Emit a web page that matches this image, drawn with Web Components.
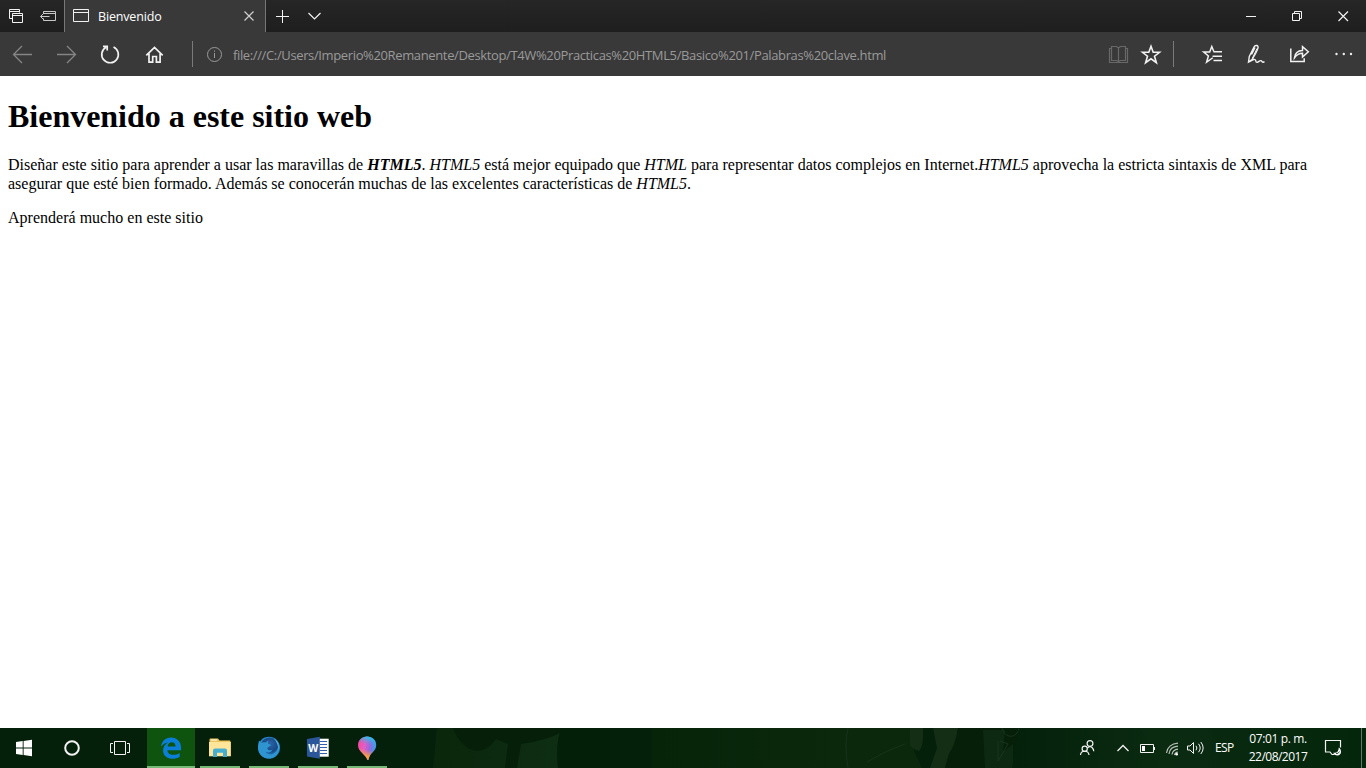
<!DOCTYPE html>
<html lang="es">
<head>
<meta charset="utf-8">
<title>Bienvenido</title>
<style>
html,body{margin:0;height:100%;overflow:hidden;background:#fff}
</style>
</head>
<body>
<desktop-screen></desktop-screen>
<script>
const define = (name, html) => customElements.define(name, class extends HTMLElement {
  constructor() {
    super();
    this.attachShadow({ mode: 'open' }).innerHTML = html;
  }
});

/* Single line of text; "span" gives the width it is tracked to. */
customElements.define('tracked-text', class extends HTMLElement {
  constructor() {
    super();
    this.attachShadow({ mode: 'open' }).innerHTML =
      '<style>:host{display:block;white-space:pre}span{display:inline-block}</style><span><slot></slot></span>';
  }
  connectedCallback() {
    const el = this.shadowRoot.querySelector('span');
    const n = this.textContent.length;
    const target = Number(this.getAttribute('span'));
    const spacing = (target - el.getBoundingClientRect().width) / n;
    el.style.letterSpacing = spacing.toFixed(4) + 'px';
  }
});

/* Icon whose view box uses screen coordinates: box="x y w h". */
const icons = {
  tabs: '<path d="M9.5 18.5v-9h10v3M9.5 11.500h10M12.500 13.500h10v9h-10zM12.500 15.500h10M9.500 18.500h3"/>',
  aside: '<g stroke="#c8c8c8"><path d="M43.500 14v-2.500h12v9h-12v-2M43.500 13.500h12M40.500 16.500h9M43.500 13.500l-3 3 3 3"/></g>',
  page: '<path d="M73.500 9.500h15v12h-15zM73.500 12.500h15"/>',
  close: '<path stroke="#d0d0d0" stroke-width="1.200" d="M244.500 11.500l9 9M253.500 11.500l-9 9"/>',
  plus: '<path d="M276 16.500h13M282.500 10v13"/>',
  chevron: '<path stroke-width="1.200" d="M308.500 13l6 6 6-6"/>',
  min: '<path d="M1246 16.500h10"/>',
  restore: '<path d="M1292.500 13.500h7v7h-7zM1294.500 13.500v-2h7v7h-2"/>',
  quit: '<path stroke-width="1.200" d="M1338.500 11.500l9.500 9.500M1348 11.500l-9.500 9.500"/>',
  back: '<path stroke="#858585" stroke-width="1.300" d="M13.500 54.500H32M22 46l-8.500 8.500 8.500 8.500"/>',
  forward: '<path stroke="#858585" stroke-width="1.300" d="M57 54.500h18.500M67 46l8.500 8.500-8.500 8.500"/>',
  reload: '<path stroke-width="1.700" d="M113.500 46.900a8.300 8.300 0 1 1-7.500.3M103 46.300h4.200v4.200"/>',
  home: '<path stroke-width="1.700" d="M146.300 55.300l8.200-7.800 8.200 7.800M149 53.500v8.700h3.700v-5.700h3.700v5.700h3.700v-8.700"/>',
  info: '<g stroke="#999"><circle cx="214.500" cy="54.500" r="7"/><path d="M214.500 53v5M214.500 50.500v1.200"/></g>',
  book: '<g stroke="#686868" stroke-width="1.200"><path d="M1111.500 46.500h5l2 1.500 2-1.500h5v14h-5l-2 1-2-1h-5zM1118.500 48v13M1111.500 48.500h-2v14h18v-14h-2"/></g>',
  star: '<path stroke-width="1.600" d="M1151 46.300l2.200 6h6.300l-5 3.900 1.900 6.500-5.400-3.900-5.400 3.900 1.900-6.500-5-3.900h6.300z"/>',
  hub: '<path stroke-width="1.500" d="M1213.800 51.500l-2-5-2.100 5.500h-6l4.700 4-1.800 6.200 5.200-3.700 1-.7M1213.500 51.700h8.500M1212.500 56.200h9.500M1213.500 60.500h8.500"/>',
  pen: '<path stroke-width="1.400" d="M1248.500 62l.8-5.500 4.700-9.500c1.200-2.500 4.800-1.700 4 .8-.3 1.200-4.500 9.300-6 11.700zM1251.500 54.500l3.500-7M1248.500 62l5-2.500c1.500-.6 2.200.6 2.300 1.500.2 2 2 1.400 3.200.4 1-.8 2.500-1.200 3 .2.300 1 1.500.7 2.500 0"/><path d="M1252.500 58l4.500-9.500"/>',
  share: '<path stroke-width="1.500" d="M1290.800 48.500v13h13.400v-3.300M1294.500 57.700c.5-4.700 3.500-7 8-7.200v-3.800l5.800 5.100-5.800 5.200v-3.700c-3.500 0-5.500 1-8 4.400z"/>',
  dots: '<g fill="#eee" stroke="none"><circle cx="1336.500" cy="54" r="1.200"/><circle cx="1343.800" cy="54" r="1.200"/><circle cx="1351" cy="54" r="1.200"/></g>',
  start: '<path fill="#fff" stroke="none" d="M16 742.100l6.700-1v6.500H16zM23.600 741l8.400-1.200v7.800h-8.400zM16 748.500h6.700v6.600l-6.700-1zM23.600 748.500H32v7.800l-8.400-1.200z"/>',
  cortana: '<circle cx="72" cy="748" r="6.800" stroke-width="2"/>',
  views: '<path d="M114.500 741.500h11v13h-11zM113 743.500h-2.500v9h2.500M127 743.500h2.500v9h-2.500"/>',
  edge: '<path fill="#0b7fd8" stroke="none" d="M161 746.500c.8-5.200 4.500-9 10-9 6.200 0 10 4.400 10 10v2.700h-13.600c.1 3 2.700 4.600 5.700 4.600 2.500 0 4.700-.7 6.500-1.900v4.100c-2.100 1.200-4.900 1.800-7.600 1.800-5.600 0-8.900-3.500-8.900-8.200 0-3.600 1.900-6.700 5-8.200-2.800.4-5.200 1.800-7.100 4.100zM167.600 746.400h8c-.1-2.700-1.400-4.200-3.800-4.200-2.500 0-3.900 1.700-4.200 4.200z"/>',
  folder: '<g stroke="none"><path fill="#edc65b" d="M209.500 739.500q0-1 1-1h7.500l1.500 2h10q1 0 1 1v14.500h-21z"/><path fill="#fff" d="M211 739.500h6v1h-6z"/><path fill="#ffe59a" d="M209 742h21.800v14.300H209z"/><path fill="#46afd0" d="M213 750.500q0-2 2-2h10q2 0 2 2v6.500h-4v-4.300h-6v4.300h-4z"/></g>',
  firefox: '<defs><radialGradient id="a" cx=".55" cy=".35" r=".65"><stop stop-color="#2c64a8"/><stop offset=".65" stop-color="#174884"/><stop offset="1" stop-color="#2582c3"/></radialGradient></defs><g stroke="none"><circle cx="269" cy="747.800" r="11" fill="#2589cc"/><circle cx="269.500" cy="746.500" r="9" fill="url(#a)"/><path fill="#2f95d0" d="M259 740.500l2.500 2.500c1-1 2.500-1 4-.5l3-2-.5 3 3 1.600c-.2 1.400-3 1.800-3.700 2.800.2 2.400 3.500 3 5.300 1.600-1 3-4.700 3.700-7 2.300 2 3.700 8 3.600 11-1 1.300-2 1.800-4 1.500-6 2 5-.4 10.500-5 12.600-5 2.400-11.500 0-13.900-5-1.800-4-.9-8.200-.2-11.900z"/><path fill="#5bb8e6" d="M274 738.500c4.500 2.500 5.500 7 4.300 11.500.1-4-1.300-8-4.300-11.500z"/></g>',
  word: '<g stroke="none"><path fill="#fff" d="M318 738.700h10.700v18H318z"/><path stroke="#3262ae" stroke-width="1.200" d="M320 741.500h7M320 744.500h7M320 747.500h7M320 750.500h7M320 753.500h7"/><path fill="#2b579a" d="M307 739l12.800-2.200v22L307 756.600z"/><text x="308.300" y="752" font-family="Open Sans,sans-serif" font-weight="700" font-size="11" textLength="10" lengthAdjust="spacingAndGlyphs" fill="#fff">W</text></g>',
  paint: '<defs><linearGradient id="a" x1="0" y1=".35" x2="1" y2=".6"><stop stop-color="#f7499d"/><stop offset=".35" stop-color="#e25fc6"/><stop offset=".62" stop-color="#9a66dc"/><stop offset="1" stop-color="#28a8ee"/></linearGradient><linearGradient id="b" x1=".65" y1="0" x2=".45" y2="1"><stop stop-color="#17d0ec"/><stop offset=".38" stop-color="#3aa4e8" stop-opacity="0"/><stop offset=".55" stop-color="#ff8a50" stop-opacity="0"/><stop offset=".85" stop-color="#ffa23e"/></linearGradient></defs><g stroke="none"><path fill="url(#a)" d="M367 736.500c5.300 0 9.200 3.800 9.200 8.700 0 6.300-6.500 7.300-7.700 14.300-.3.800-1 .6-1.200 0-1.600-5.500-9.300-7.600-9.300-14.300 0-5 3.900-8.700 9-8.700z"/><path fill="url(#b)" d="M367 736.500c5.300 0 9.200 3.800 9.200 8.700 0 6.300-6.500 7.300-7.700 14.300-.3.800-1 .6-1.200 0-1.600-5.500-9.300-7.600-9.300-14.300 0-5 3.900-8.700 9-8.700z"/></g>',
  people: '<g stroke-width="1.200"><circle cx="1090" cy="743.500" r="2.900"/><path d="M1087.500 748c1.500-1.700 3.700-1.600 5 0 .8 1 1.200 2 1.300 3.300"/><circle cx="1084.700" cy="748.700" r="2.600"/><path d="M1080.500 755c.3-5 8-5 8.500 0"/></g>',
  up: '<path stroke-width="1.300" d="M1117.500 751l5.500-5.500 5.500 5.500"/>',
  battery: '<path d="M1140.500 744.500h13v8h-13zM1154.500 747v3"/><path fill="#fff" stroke="none" d="M1142 746h3v5h-3z"/>',
  wifi: '<g stroke="#ddd" stroke-width="1.200"><path stroke="#b6c1b7" d="M1166.500 753c.5-5.500 5-9.500 11.500-9.800M1169 754c.5-4.400 4-7.500 9-7.800M1172 754.500c.5-3 2.500-5 6-5.300M1174.500 755c.4-1.700 1.400-2.700 3.300-2.900"/><circle cx="1176.700" cy="754.300" r="1.300" fill="#fff" stroke="none"/></g>',
  sound: '<path d="M1187.500 746h2.500l3.500-3.500v11l-3.500-3.500h-2.500zM1196 745.800q1.800 2.200 0 4.500M1198.500 743.800q3.400 4.200 0 8.400M1200.800 742q4.700 6 0 12"/>',
  notes: '<path stroke-width="1.200" d="M1334.500 754.500l-2.500 0-2-2.500h-4.500v-11.500h15v7"/><path fill="#fff" stroke="none" d="M1338.800 747.500c3.500 2.500 2.700 8-1.300 8-2.200 0-3.700-1-4.200-2.800 3.700.7 5.200-1.300 5.500-5.200z"/><path stroke="#0a280d" stroke-width=".8" d="M1336 753.500q2.500.5 3.500-2"/>'
};
customElements.define('ui-icon', class extends HTMLElement {
  constructor() {
    super();
    const [x, y, w, h] = this.getAttribute('box').split(' ');
    this.attachShadow({ mode: 'open' }).innerHTML =
      `<style>:host{display:block;flex:none;width:${w}px;height:${h}px}svg{display:block}</style>
       <svg width="${w}" height="${h}" viewBox="${x} ${y} ${w} ${h}" fill="none" stroke="#f2f2f2">${icons[this.getAttribute('name')]}</svg>`;
  }
});

define('tab-strip', `
<style>
:host{display:flex;height:32px;background:linear-gradient(#262626,#1e1e1e);font:12.5px/34px "Open Sans",sans-serif;color:#fff}
.tab{display:flex;box-sizing:border-box;width:202px;background:#393939;border:solid #777;border-width:0 1px}
tracked-text{flex:1}
.window{display:flex;margin-left:auto}
</style>
<ui-icon name="tabs" box="0 0 32 32"></ui-icon><ui-icon name="aside" box="32 0 32 32"></ui-icon>
<div class="tab"><ui-icon name="page" box="65 0 33 32"></ui-icon><tracked-text span="63.500">Bienvenido</tracked-text><ui-icon name="close" box="233 0 32 32"></ui-icon></div>
<ui-icon name="plus" box="266 0 32 32"></ui-icon><ui-icon name="chevron" box="298 0 32 32"></ui-icon>
<div class="window"><ui-icon name="min" box="1228 0 46 32"></ui-icon><ui-icon name="restore" box="1274 0 46 32"></ui-icon><ui-icon name="quit" box="1320 0 46 32"></ui-icon></div>`);

define('tool-bar', `
<style>
:host{display:flex;height:44px;background:#393939;font:13px/46px "Open Sans",sans-serif;color:#999}
i{flex:none;width:1px;height:26px;margin:9px 0 0;background:#7a7a7a}
.nav{display:flex;width:192px}
tracked-text{flex:1;height:44px}
.end{margin:9px 16px 0 6px}
</style>
<div class="nav"><ui-icon name="back" box="0 32 44 44"></ui-icon><ui-icon name="forward" box="44 32 44 44"></ui-icon><ui-icon name="reload" box="88 32 44 44"></ui-icon><ui-icon name="home" box="132 32 44 44"></ui-icon></div>
<i></i><ui-icon name="info" box="193 32 40 44"></ui-icon>
<tracked-text span="653">file:///C:/Users/Imperio%20Remanente/Desktop/T4W%20Practicas%20HTML5/Basico%201/Palabras%20clave.html</tracked-text>
<ui-icon name="book" box="1103 32 32 44"></ui-icon><ui-icon name="star" box="1135 32 32 44"></ui-icon><i class="end"></i>
<ui-icon name="hub" box="1190 32 44 44"></ui-icon><ui-icon name="pen" box="1234 32 44 44"></ui-icon><ui-icon name="share" box="1278 32 44 44"></ui-icon><ui-icon name="dots" box="1322 32 44 44"></ui-icon>`);

define('web-document', `
<style>
:host{display:block;box-sizing:border-box;padding:22px 8px 0;background:#fff;color:#000;font:16px/19px "Liberation Serif",serif}
h1{margin:0;font-size:32px;line-height:37px}
.text{margin:20px 0 15px}
p{margin:0}
</style>
<h1><tracked-text span="364">Bienvenido a este sitio web</tracked-text></h1>
<p class="text"><tracked-text span="1299">Diseñar este sitio para aprender a usar las maravillas de <em><strong>HTML5</strong></em>. <em>HTML5</em> está mejor equipado que <em>HTML</em> para representar datos complejos en Internet.<em>HTML5</em> aprovecha la estricta sintaxis de XML para</tracked-text><tracked-text span="683">asegurar que esté bien formado. Además se conocerán muchas de las excelentes características de <em>HTML5</em>.</tracked-text></p>
<p><tracked-text span="195">Aprenderá mucho en este sitio</tracked-text></p>`);

define('app-button', `
<style>
:host{display:flex;flex-direction:column;box-sizing:border-box;width:48px;height:40px;margin-right:1px;padding:0}
:host([active]){background:#0e540e}
.line{height:2px;margin:0 4px;background:#76b976}
:host([active]) .line{margin:0}
</style><slot></slot><div class="line"></div>`);

define('task-wallpaper', `
<style>:host{position:absolute;inset:0}svg{display:block}</style>
<svg width="1366" height="40" viewBox="0 728 1366 40">
<defs><linearGradient id="l" x1="0" x2="1"><stop stop-color="#0a260b"/><stop offset="1" stop-color="#0e2e14"/></linearGradient>
<linearGradient id="m" x1="0" x2="1"><stop stop-color="#052408"/><stop offset=".7" stop-color="#0a270c"/><stop offset="1" stop-color="#0b280d"/></linearGradient>
<linearGradient id="r" x1="0" x2="1"><stop stop-color="#04210b"/><stop offset=".4" stop-color="#0a2a10"/><stop offset="1" stop-color="#04270c"/></linearGradient></defs>
<path fill="url(#l)" d="M437 728h125q-7 12-4 40H433z"/><path fill="#051f08" d="M482 728h84q-6 10-44 16l-4 24h-12l3-24-12-5c-16 22-35 10-43-11z" transform="translate(-1)"/>
<path fill="#041f07" d="M562 728h48v40h-52q-2-28 4-40z"/><path fill="#04200a" d="M610 728h42v40h-42z"/><path fill="url(#m)" d="M652 728h195v40H652z"/>
<path fill="#0b280d" d="M847 728h65q0 14 2 23l8 17h-75z"/>
<path fill="none" stroke="#163419" d="M867 762q20-12 38-18M848 728q-4 16 0 40"/>
<path fill="#142d15" d="M910 728h48q-2 16-9 26l-4 14h-15l7-20-4-20h-10q1 18-4 23-7-2-9-6z"/>
<path fill="#051f09" d="M958 728h67v40h-80l4-14q7-10 9-26z"/>
<path fill="#0d2911" d="M983 730h22l-2 22 10-8v24h-28z"/><path fill="none" stroke="#1b3420" d="M1002 728c3 11 15 11 17 0M998 741v20l10-17-8-3"/>
<path fill="url(#r)" d="M1019 728h347v40h-354z"/><path fill="#0c2e13" opacity=".4" d="M1140 728h70l12 40h-62z"/></svg>`);

define('task-bar', `
<style>
:host{position:relative;display:flex;height:40px;background:#04200a;color:#fff;font:12px/18px "Open Sans",sans-serif}
.apps,.tray{position:relative;display:flex}
.system{display:flex;width:147px}
.tray{margin-left:auto}
.lang{width:31px;line-height:40px;padding-left:3px;box-sizing:border-box}
.clock{display:flex;flex-direction:column;align-items:center;width:76px;padding:2px 6px 0 0;box-sizing:border-box}
.show{box-sizing:border-box;width:5px;border-left:1px solid #62766a}
</style>
<task-wallpaper></task-wallpaper>
<div class="apps"><div class="system"><ui-icon name="start" box="0 728 48 40"></ui-icon><ui-icon name="cortana" box="48 728 48 40"></ui-icon><ui-icon name="views" box="96 728 48 40"></ui-icon></div>
<app-button active><ui-icon name="edge" box="147 728 48 38"></ui-icon></app-button>
<app-button><ui-icon name="folder" box="196 728 48 38"></ui-icon></app-button>
<app-button><ui-icon name="firefox" box="245 728 48 38"></ui-icon></app-button>
<app-button><ui-icon name="word" box="294 728 48 38"></ui-icon></app-button>
<app-button><ui-icon name="paint" box="343 728 48 38"></ui-icon></app-button></div>
<div class="tray"><ui-icon name="people" box="1063 728 48 40"></ui-icon><ui-icon name="up" box="1111 728 24 40"></ui-icon><ui-icon name="battery" box="1135 728 25 40"></ui-icon><ui-icon name="wifi" box="1160 728 24 40"></ui-icon><ui-icon name="sound" box="1184 728 28 40"></ui-icon>
<div class="lang"><tracked-text span="18.500">ESP</tracked-text></div>
<div class="clock"><tracked-text span="57.500">07:01 p. m.</tracked-text><tracked-text span="58.500">22/08/2017</tracked-text></div>
<ui-icon name="notes" box="1319 728 42 40"></ui-icon><div class="show"></div></div>`);

define('desktop-screen', `
<style>:host{display:flex;flex-direction:column;width:1366px;height:768px;overflow:hidden}web-document{flex:1}</style>
<tab-strip></tab-strip><tool-bar></tool-bar><web-document></web-document><task-bar></task-bar>`);
</script>
</body>
</html>
